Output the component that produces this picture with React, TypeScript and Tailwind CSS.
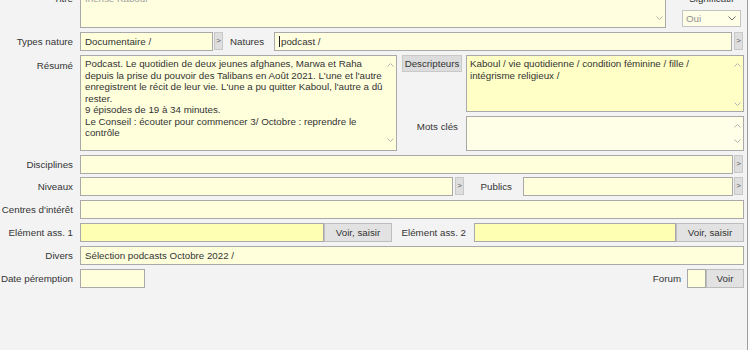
import React from "react";

const Chev = ({ up, color = "#b4b4b4" }: { up?: boolean; color?: string }) => (
  <svg width="7" height="4" viewBox="0 0 7 4" className="block">
    <path
      d={up ? "M0.5 3.5L3.5 0.5L6.5 3.5" : "M0.5 0.5L3.5 3.5L6.5 0.5"}
      fill="none"
      stroke={color}
      strokeWidth="1"
    />
  </svg>
);

const Label = ({ children, className = "" }: { children?: React.ReactNode; className?: string }) => (
  <div className={`w-[80px] shrink-0 text-right pr-[7px] whitespace-nowrap ${className}`}>{children}</div>
);

const Arrow = ({ className = "" }: { className?: string }) => (
  <div
    className={`w-[9px] h-[18px] shrink-0 bg-[#dedede] border border-[#c8c8c8] flex items-center justify-center text-[8px] leading-none text-[#555] ${className}`}
  >
    &gt;
  </div>
);

const Input = ({
  className = "",
  children,
}: {
  className?: string;
  children?: React.ReactNode;
}) => (
  <div
    className={`h-full shrink-0 border border-[#a9a9a9] flex items-center px-[4px] whitespace-nowrap overflow-hidden ${className}`}
  >
    {children}
  </div>
);

const Btn = ({ className = "", children }: { className?: string; children?: React.ReactNode }) => (
  <div
    className={`h-full shrink-0 bg-[#e2e2e2] border border-[#bdbdbd] flex items-center justify-center whitespace-nowrap text-[#333] ${className}`}
  >
    {children}
  </div>
);

const Scroll = ({ className = "" }: { className?: string }) => (
  <div className={`w-[12px] shrink-0 flex flex-col justify-between items-center ${className}`}>
    <Chev up />
    <Chev />
  </div>
);

export default function App() {
  const resume = [
    "Podcast. Le quotidien de deux jeunes afghanes, Marwa et Raha",
    "depuis la prise du pouvoir des Talibans en Août 2021. L'une et l'autre",
    "enregistrent le récit de leur vie. L'une a pu quitter Kaboul, l'autre a dû",
    "rester.",
    "9 épisodes de 19 à 34 minutes.",
    "Le Conseil : écouter pour commencer 3/ Octobre : reprendre le",
    "contrôle",
  ];
  return (
    <div className="w-[750px] h-[350px] overflow-hidden flex bg-[#f3f3f3] font-['Liberation_Sans',Arial,sans-serif] text-[9.75px] leading-[11.5px] text-[#333]">
      <div className="w-[747px] shrink-0 flex flex-col">
        {/* Titre */}
        <div className="mt-[-10px] h-[38px] flex items-start shrink-0">
          <Label className="pt-[3px]">Titre</Label>
          <div className="w-[586px] h-full border border-[#a9a9a9] bg-[#ffffdf] flex">
            <div className="flex-1 pl-[4px] pt-[2px] text-[#a0a0a0]">Inense Kaboul</div>
            <Scroll className="pt-[3px] pb-[7px]" />
          </div>
          <div className="ml-[16px] w-[59px] flex flex-col items-center">
            <div className="h-[20px] pt-[3px] whitespace-nowrap">Significatif</div>
            <div className="w-full h-[17px] border border-[#c4c4c4] bg-[#ffffe8] flex items-center justify-between pl-[3px] pr-[4px] text-[#8f8f8f]">
              <span>Oui</span>
              <svg width="8" height="5" viewBox="0 0 8 5" className="block">
                <path d="M0.5 0.5L4 4L7.5 0.5" fill="none" stroke="#6f6f6f" strokeWidth="1" />
              </svg>
            </div>
          </div>
        </div>

        {/* Types nature */}
        <div className="mt-[4px] h-[19px] flex items-start shrink-0">
          <Label className="self-center">Types nature</Label>
          <Input className="w-[133px] bg-[#ffffdc]">Documentaire /</Input>
          <Arrow className="ml-[1px]" />
          <div className="ml-[7px] w-[44px] self-center whitespace-nowrap">Natures</div>
          <Input className="w-[458px] bg-[#ffffdf] border-[#7fb3e6]">
            <span className="w-px h-[11px] bg-[#222] mr-[1px]" />
            podcast /
          </Input>
          <Arrow className="ml-[2px]" />
        </div>

        {/* Résumé */}
        <div className="mt-[4px] h-[96px] flex items-start shrink-0">
          <Label className="pt-[5px]">Résumé</Label>
          <div className="w-[317px] h-full border border-[#a9a9a9] bg-[#ffffdc] flex">
            <div className="flex-1 pl-[4px] pt-[2px] whitespace-nowrap">
              {resume.map((l, i) => (
                <div key={i}>{l}</div>
              ))}
            </div>
            <Scroll className="pt-[7px] pb-[8px]" />
          </div>
          <div className="w-[348px] flex flex-col">
            <div className="h-[57px] flex items-start">
              <div className="w-[69px] shrink-0 pl-[5px]">
                <div className="w-[60px] h-[17px] bg-[#dcdcdc] border border-[#c9c9c9] flex items-center justify-center">
                  Descripteurs
                </div>
              </div>
              <div className="w-[278px] h-full border border-[#a9a9a9] bg-[#ffffc6] flex">
                <div className="flex-1 pl-[3px] pt-[2px] whitespace-nowrap">
                  <div>Kaboul / vie quotidienne / condition féminine / fille /</div>
                  <div>intégrisme religieux /</div>
                </div>
                <Scroll className="pt-[7px] pb-[5px]" />
              </div>
            </div>
            <div className="mt-[4px] h-[35px] flex items-start">
              <div className="w-[69px] shrink-0 text-right pr-[8px] pt-[5px] whitespace-nowrap">Mots clés</div>
              <div className="w-[278px] h-full border border-[#a9a9a9] bg-[#ffffe8] flex">
                <div className="flex-1" />
                <Scroll className="pt-[7px] pb-[7px]" />
              </div>
            </div>
          </div>
        </div>

        {/* Disciplines */}
        <div className="mt-[4px] h-[19px] flex items-center shrink-0">
          <Label>Disciplines</Label>
          <Input className="w-[653px] bg-[#ffffdc]" />
          <Arrow className="ml-[1px] self-start" />
        </div>

        {/* Niveaux / Publics */}
        <div className="mt-[3px] h-[19px] flex items-center shrink-0">
          <Label>Niveaux</Label>
          <Input className="w-[373px] bg-[#ffffdc]" />
          <Arrow className="ml-[2px] self-start" />
          <div className="w-[59px] shrink-0 text-right pr-[11px]">Publics</div>
          <Input className="w-[210px] bg-[#ffffdc]" />
          <Arrow className="ml-[1px] self-start" />
        </div>

        {/* Centres d'intérêt */}
        <div className="mt-[4px] h-[19px] flex items-center shrink-0">
          <Label>Centres d'intérêt</Label>
          <Input className="w-[664px] bg-[#ffffdc]" />
        </div>

        {/* Elément ass */}
        <div className="mt-[4px] h-[19px] flex items-center shrink-0">
          <Label>Elément ass. 1</Label>
          <Input className="w-[244px] bg-[#ffffb4]" />
          <Btn className="w-[68px]">Voir, saisir</Btn>
          <div className="w-[82px] shrink-0 text-right pr-[8px] whitespace-nowrap">Elément ass. 2</div>
          <Input className="w-[202px] bg-[#ffffb4]" />
          <Btn className="w-[68px]">Voir, saisir</Btn>
        </div>

        {/* Divers */}
        <div className="mt-[4px] h-[19px] flex items-center shrink-0">
          <Label>Divers</Label>
          <Input className="w-[664px] bg-[#ffffdc]">Sélection podcasts Octobre 2022 /</Input>
        </div>

        {/* Date péremption / Forum */}
        <div className="mt-[4px] h-[19px] flex items-center shrink-0">
          <Label className="pr-[3px]">Date péremption</Label>
          <Input className="w-[65px] bg-[#ffffdc]" />
          <div className="flex-1" />
          <div className="pr-[6px] whitespace-nowrap">Forum</div>
          <Input className="w-[19px] bg-[#ffffdc]" />
          <Btn className="w-[38px]">Voir</Btn>
          <div className="w-[3px] shrink-0" />
        </div>
      </div>
      <div className="w-px shrink-0 bg-[#9e9e9e]" />
      <div className="w-[2px] shrink-0 bg-[#fbfbfb]" />
    </div>
  );
}
